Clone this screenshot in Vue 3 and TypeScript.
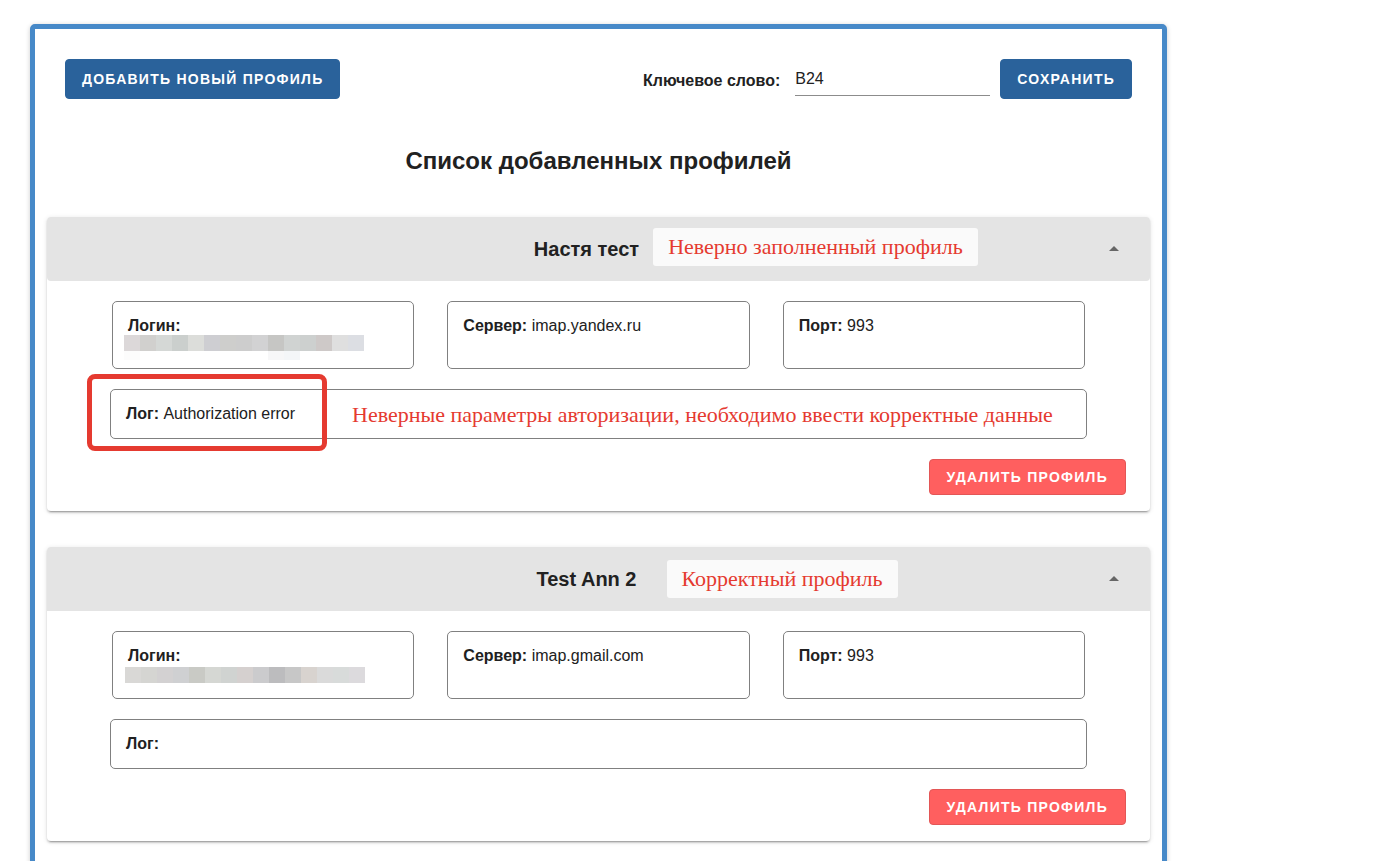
<script setup lang="ts">
import { ref } from 'vue'

interface Profile {
  id: number
  name: string
  mosaic: string[]
  mosaicTail: string[]
  server: string
  port: number
  log: string
  note: string
  logNote: string
  valid: boolean
  open: boolean
}

const keyword = ref('B24')

const profiles = ref<Profile[]>([
  {
    id: 1,
    name: 'Настя тест',
    mosaic: ['#dcd8d9', '#d1d0ce', '#d5d8d6', '#cbcfcd', '#dcddda', '#ceced2', '#cececc', '#cdcdcd', '#d2d2d3', '#c6c6c4', '#d0d3d2', '#cdd0cf', '#cec9c8', '#dfdfdf', '#dcdee3'],
    mosaicTail: ['#fcfcfc', '', '', '', '', '', '', '', '', '#f7f7f8', '#f4f6f8'],
    server: 'imap.yandex.ru',
    port: 993,
    log: 'Authorization error',
    note: 'Неверно заполненный профиль',
    logNote: 'Неверные параметры авторизации, необходимо ввести корректные данные',
    valid: false,
    open: true,
  },
  {
    id: 2,
    name: 'Test Ann 2',
    mosaic: ['#d9d8d6', '#d5d5d2', '#d3d1d2', '#cfd0d2', '#c9cac5', '#d5d7d3', '#d0d3d1', '#d5d0cf', '#cbcbcd', '#bcbcbe', '#c7c7c7', '#d8d3cf', '#dadada', '#d8dbda', '#dcdadd'],
    mosaicTail: [],
    server: 'imap.gmail.com',
    port: 993,
    log: '',
    note: 'Корректный профиль',
    logNote: '',
    valid: true,
    open: true,
  },
])

function removeProfile(id: number): void {
  profiles.value = profiles.value.filter((p) => p.id !== id)
}
</script>

<template>
  <div class="page">
    <main class="frame">
      <div class="toolbar">
        <button type="button" class="btn primary">Добавить новый профиль</button>
        <form class="keyword" @submit.prevent>
          <label for="keyword">Ключевое слово:</label>
          <input id="keyword" v-model="keyword" type="text" />
          <button type="submit" class="btn primary">Сохранить</button>
        </form>
      </div>

      <h1>Список добавленных профилей</h1>

      <section v-for="p in profiles" :key="p.id" class="card">
        <header class="card-head" :class="{ rounded: !p.valid }">
          <h2>
            {{ p.name }}
            <span class="note" :class="{ ok: p.valid }">{{ p.note }}</span>
          </h2>
          <button type="button" class="toggle" aria-label="Свернуть профиль" :aria-expanded="p.open" @click="p.open = !p.open">
            <svg viewBox="0 0 24 24" width="24" height="24" aria-hidden="true"><path d="M7 14l5-5 5 5z" fill="#666" /></svg>
          </button>
        </header>
        <div v-if="p.open" class="card-body">
          <div class="fields">
            <div class="box">
              <b>Логин:</b>
              <div class="mosaic" :class="{ ok: p.valid }">
                <div class="tiles">
                  <i v-for="(c, i) in p.mosaic" :key="i" :style="{ background: c }"></i>
                </div>
                <div class="tiles tail">
                  <i v-for="(c, i) in p.mosaicTail" :key="i" :style="{ background: c }"></i>
                </div>
              </div>
            </div>
            <div class="box"><b>Сервер:</b> {{ p.server }}</div>
            <div class="box"><b>Порт:</b> {{ p.port }}</div>
          </div>
          <div class="box log">
            <b>Лог:</b> {{ p.log }}
            <span v-if="p.logNote" class="highlight"></span>
            <span v-if="p.logNote" class="log-note">{{ p.logNote }}</span>
          </div>
          <div class="actions">
            <button type="button" class="btn danger" @click="removeProfile(p.id)">Удалить профиль</button>
          </div>
        </div>
      </section>
    </main>
  </div>
</template>

<style>
body {
  margin: 0;
  background: #fff;
}
</style>

<style scoped>
.page {
  box-sizing: border-box;
  height: 100vh;
  overflow: hidden;
  padding: 24px 210px 0 30px;
  font-family: "Liberation Sans", Arial, sans-serif;
  font-size: 16px;
  line-height: 18px;
  color: #212121;
}
.frame {
  border: 5px solid #4789c8;
  border-radius: 5px;
  padding: 30px 12px 40px;
  background: #fff;
  box-shadow: 0 1px 5px rgba(0, 0, 0, 0.2);
}
.toolbar {
  display: flex;
  justify-content: space-between;
  padding: 0 18px;
}
.keyword {
  display: flex;
  align-items: center;
}
.keyword label {
  font-weight: 700;
  margin: 3px 15px 0 0;
}
.keyword input {
  box-sizing: border-box;
  width: 195px;
  height: 34px;
  margin-right: 10px;
  padding: 0;
  border: 0;
  border-bottom: 1px solid #8c8c8c;
  background: transparent;
  font: inherit;
  color: inherit;
  outline: 0;
}
.btn {
  box-sizing: border-box;
  height: 40px;
  padding: 0 16px;
  border: 1px solid transparent;
  border-radius: 4px;
  font-family: inherit;
  font-size: 14px;
  font-weight: 700;
  letter-spacing: 1.25px;
  text-transform: uppercase;
  color: #fff;
  cursor: pointer;
}
.primary {
  background: #2a629b;
  border-color: #2a629b;
}
.danger {
  height: 36px;
  padding: 0 17px;
  background: #ff5f5f;
  border-color: #e35656;
}
h1 {
  margin: 46px 0 40px;
  font-size: 24px;
  line-height: 32px;
  text-align: center;
}
.card {
  border-radius: 4px;
  margin-bottom: 36px;
  box-shadow: 0 3px 1px -2px rgba(0, 0, 0, 0.2), 0 2px 2px 0 rgba(0, 0, 0, 0.14), 0 1px 5px 0 rgba(0, 0, 0, 0.12);
}
.card-head {
  display: flex;
  align-items: center;
  justify-content: center;
  height: 64px;
  padding: 0 24px;
  border-radius: 4px 4px 0 0;
  background: #e4e4e4;
}
.card-head.rounded {
  border-radius: 4px;
}
h2 {
  position: relative;
  margin: 0 auto;
  font-size: 20px;
  font-weight: 900;
  line-height: 24px;
}
.note,
.log-note {
  font-family: "Liberation Serif", "Times New Roman", serif;
  font-size: 22px;
  font-weight: 400;
  white-space: nowrap;
  color: #e53a30;
}
.note {
  position: absolute;
  top: -9px;
  left: calc(100% + 14px);
  padding: 0 15px;
  line-height: 38px;
  border-radius: 3px;
  background: #fafafa;
}
.note.ok {
  top: -7px;
  left: calc(100% + 30px);
}
.toggle {
  display: flex;
  padding: 0;
  border: 0;
  background: none;
  cursor: pointer;
}
.card-body {
  padding: 20px 24px 16px;
}
.fields {
  display: grid;
  grid-template-columns: repeat(3, 1fr);
  gap: 33px;
  margin: 0 41px;
}
.box {
  position: relative;
  box-sizing: border-box;
  min-height: 68px;
  padding: 15px;
  border: 1px solid #808080;
  border-radius: 5px;
}
.log {
  min-height: 50px;
  margin: 20px 39px;
}
.mosaic {
  position: absolute;
  top: 33px;
  left: 11px;
}
.mosaic.ok {
  top: 35px;
  left: 12px;
}
.tiles {
  display: flex;
}
.tiles i {
  width: 16px;
  height: 16px;
}
.tail i {
  height: 9px;
}
.highlight {
  position: absolute;
  box-sizing: border-box;
  top: -16px;
  left: -24px;
  width: 240px;
  height: 77px;
  border: 5px solid #e53a30;
  border-radius: 8px;
}
.log-note {
  position: absolute;
  top: 12px;
  left: 241px;
  line-height: 26px;
}
.actions {
  display: flex;
  justify-content: flex-end;
}
</style>
